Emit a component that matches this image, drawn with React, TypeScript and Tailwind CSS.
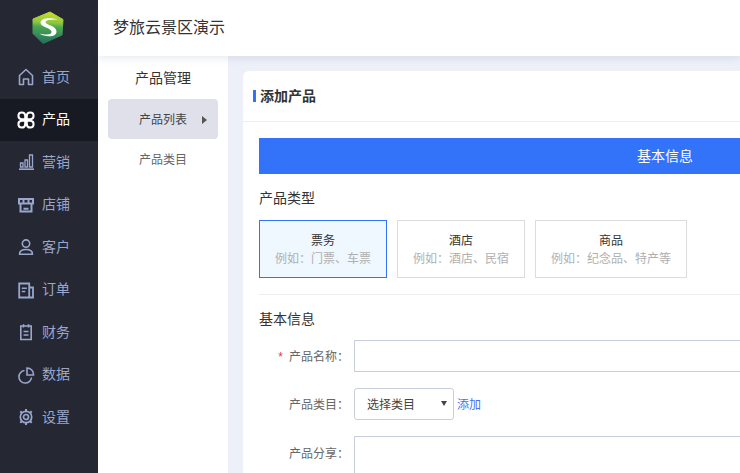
import type { ReactNode } from 'react'

const cjk = "font-['Liberation_Sans','Noto_Sans_CJK_SC',sans-serif]"

const icons: Record<string, ReactNode> = {
  home: <path d="M2.500 7.500 9 1.500l6.500 6v9h-4V11h-5v5.500h-4z" strokeLinejoin="round" />,
  product: (
    <>
      <path d="M8.200 8.200H4.600a3.400 3.400 0 1 1 3.600-3.600z" />
      <path d="M9.800 8.200h3.600a3.400 3.400 0 1 0-3.600-3.600z" />
      <path d="M8.200 9.800H4.600a3.400 3.400 0 1 0 3.600 3.600z" />
      <path d="M9.800 9.800h3.600a3.400 3.400 0 1 1-3.600 3.600z" />
    </>
  ),
  market: (
    <>
      <path d="M3.500 10h2.500v4H3.500zM8 7h2.500v7H8zM12.500 2h3v12h-3z" strokeWidth="1.300" />
      <path d="M2 16.200h15" />
    </>
  ),
  shop: <path d="M2 3h14v4.500H2zM3.500 7.500V15.500h11V7.500M6.500 3v4.500M11.500 3v4.500M6.500 12.800h5" strokeWidth="2" />,
  customer: (
    <>
      <circle cx="9" cy="5.600" r="3.700" />
      <path d="M2.500 16.200c0-3 2.500-4.700 6.500-4.700s6.500 1.700 6.500 4.700z" strokeLinejoin="round" />
    </>
  ),
  order: (
    <>
      <path d="M2.200 2.500h10v14h-10zM12.200 6.500h3.800v10h-3.800" strokeWidth="1.800" />
      <path d="M4.800 7.200h5M4.800 10.500h3.500" />
    </>
  ),
  finance: <path d="M3.800 3h10.400v13.500H3.800zM6.500 1.200v3.300M11.500 1.200v3.300M6.500 8.500h5M6.500 12h5" />,
  data: (
    <>
      <path d="M7.500 4.500a6.300 6.300 0 1 0 7 7" />
      <path d="M10 2a6.500 6.500 0 0 1 6.500 7H10z" />
    </>
  ),
  setting: (
    <>
      <circle cx="9" cy="9" r="5.700" strokeWidth="1.700" />
      <circle cx="9" cy="9" r="2.500" strokeWidth="1.700" />
      <path d="M9 1v2M9 15v2M3.300 3.300l1.400 1.400M13.300 13.300l1.400 1.400M14.700 3.300l-1.400 1.400M4.700 13.300l-1.400 1.400" strokeWidth="2" />
    </>
  ),
}

const navItems = [
  { key: 'home', label: '首页' },
  { key: 'product', label: '产品', active: true },
  { key: 'market', label: '营销' },
  { key: 'shop', label: '店铺' },
  { key: 'customer', label: '客户' },
  { key: 'order', label: '订单' },
  { key: 'finance', label: '财务' },
  { key: 'data', label: '数据' },
  { key: 'setting', label: '设置' },
]

function Logo() {
  return (
    <svg width="34" height="34" viewBox="0 0 34 34">
      <defs>
        <linearGradient id="hex" x1="0.5" y1="0.05" x2="0.45" y2="1">
          <stop offset="0" stopColor="#c3da2f" />
          <stop offset="0.3" stopColor="#8cc63f" />
          <stop offset="0.45" stopColor="#4aa552" />
          <stop offset="1" stopColor="#24705f" />
        </linearGradient>
      </defs>
      <path d="M19 1 32 8.500 31 24l-19 8.500L2 22.500V8z" fill="url(#hex)" stroke="url(#hex)" strokeLinejoin="round" />
      <path
        d="M27 8.500C20 6.500 10 6.500 9.500 11.500c-.4 4.500 10 5 11 9 .6 2.800-4 4-12 2 5 3.500 17 4.500 17-2 0-6-10.500-6-11-9.500-.3-2 6-2.700 12.500-2.500z"
        fill="#fff"
      />
    </svg>
  )
}

function Sidebar() {
  return (
    <div className="w-[98px] shrink-0 bg-[#252733]">
      <div className="h-[56px] flex items-center justify-center pr-[2px]">
        <Logo />
      </div>
      {navItems.map((item) => (
        <div
          key={item.key}
          className={`h-[42.5px] flex items-center pl-[17px] gap-[7px] text-[14px] ${
            item.active ? 'bg-[#171a23] text-white' : 'text-[#9aa6cb]'
          }`}>
          <svg
            width="18"
            height="18"
            viewBox="0 0 18 18"
            fill="none"
            stroke="currentColor"
            strokeWidth={item.active ? 2 : 1.600}>
            {icons[item.key]}
          </svg>
          <span>{item.label}</span>
        </div>
      ))}
    </div>
  )
}

function TypeCard({ title, hint, active, width }: { title: string; hint: string; active?: boolean; width: string }) {
  return (
    <div
      className={`${width} h-[58px] border flex flex-col items-center justify-center pt-[2px] text-[12px] leading-[18px] ${
        active ? 'border-[#3273fa] bg-[#eff7ff]' : 'border-[#dcdcdc] bg-white'
      }`}>
      <div className="text-[#333]">{title}</div>
      <div className="text-[#b0b0b0]">{hint}</div>
    </div>
  )
}

function FormLabel({ children, required }: { children: ReactNode; required?: boolean }) {
  return (
    <div className="w-[90px] mr-[5px] shrink-0 pt-[2px] text-right text-[12px] text-[#666]">
      {required && <span className="text-[#e4393c] mr-[6px]">*</span>}
      {children}
    </div>
  )
}

export default function App() {
  return (
    <div className={`w-[740px] h-[473px] overflow-hidden flex ${cjk}`}>
      <Sidebar />
      <div className="flex-1 min-w-0 flex flex-col">
        <div className="h-[56px] shrink-0 bg-white flex items-center pl-[15px] text-[16px] text-[#333] shadow-[0_2px_8px_rgba(60,70,110,0.12)] z-10">
          梦旅云景区演示
        </div>
        <div className="flex-1 min-h-0 flex">
          <div className="w-[130px] shrink-0 bg-white">
            <div className="h-[43px] flex items-center justify-center pt-[1px] text-[14px] text-[#333]">产品管理</div>
            <div className="ml-[10px] w-[110px] h-[40px] rounded-[4px] bg-[#dfe0ea] flex items-center pl-[31px] pt-[2px] text-[12px] text-[#444]">
              产品列表
              <span className="w-0 h-0 border-y-[4px] border-y-transparent border-l-[5px] border-l-[#555] ml-[15px]" />
            </div>
            <div className="h-[40px] flex items-center pl-[41px] pt-[2px] text-[12px] text-[#666]">产品类目</div>
          </div>
          <div className="flex-1 min-w-0 bg-[#edf0f9] pt-[15px] pl-[15px] overflow-hidden">
            <div className="w-[860px] h-[500px] bg-white rounded-[6px]">
              <div className="h-[51px] border-b border-[#eeeeee] flex items-center pl-[10px] gap-[4px] text-[14px] font-bold text-[#333]">
                <span className="w-[3px] h-[12px] bg-[#3273fa]" />
                添加产品
              </div>
              <div className="pl-[16px] pt-[16px]">
                <div className="w-[812px] h-[36px] bg-[#3273fa] flex items-center justify-center text-[14px] text-white">
                  基本信息
                </div>
                <div className="mt-[14px] text-[14px] leading-[20px] text-[#333]">产品类型</div>
                <div className="mt-[12px] flex gap-[10px]">
                  <TypeCard title="票务" hint="例如：门票、车票" active width="w-[128px]" />
                  <TypeCard title="酒店" hint="例如：酒店、民宿" width="w-[128px]" />
                  <TypeCard title="商品" hint="例如：纪念品、特产等" width="w-[152px]" />
                </div>
                <div className="mt-[16px] border-t border-[#eeeeee]" />
                <div className="mt-[14px] text-[14px] leading-[20px] text-[#333]">基本信息</div>
                <div className="mt-[11px] flex items-center">
                  <FormLabel required>产品名称：</FormLabel>
                  <div className="w-[500px] h-[32px] border border-[#c8ced9]" />
                </div>
                <div className="mt-[16px] flex items-center">
                  <FormLabel>产品类目：</FormLabel>
                  <div className="w-[100px] h-[32px] border border-[#c8ced9] rounded-[3px] flex items-center justify-between pl-[12px] pr-[6px] pt-[1px] text-[12px] text-[#444]">
                    选择类目
                    <span className="w-0 h-0 -mt-[2px] border-x-[3px] border-x-transparent border-t-[5px] border-t-[#444]" />
                  </div>
                  <span className="ml-[3px] pt-[1px] text-[12px] text-[#3f73f8]">添加</span>
                </div>
                <div className="mt-[16px] flex items-start">
                  <div className="mt-[7px] flex">
                    <FormLabel>产品分享：</FormLabel>
                  </div>
                  <div className="w-[500px] h-[80px] border border-[#c8ced9]" />
                </div>
              </div>
            </div>
          </div>
        </div>
      </div>
    </div>
  )
}
